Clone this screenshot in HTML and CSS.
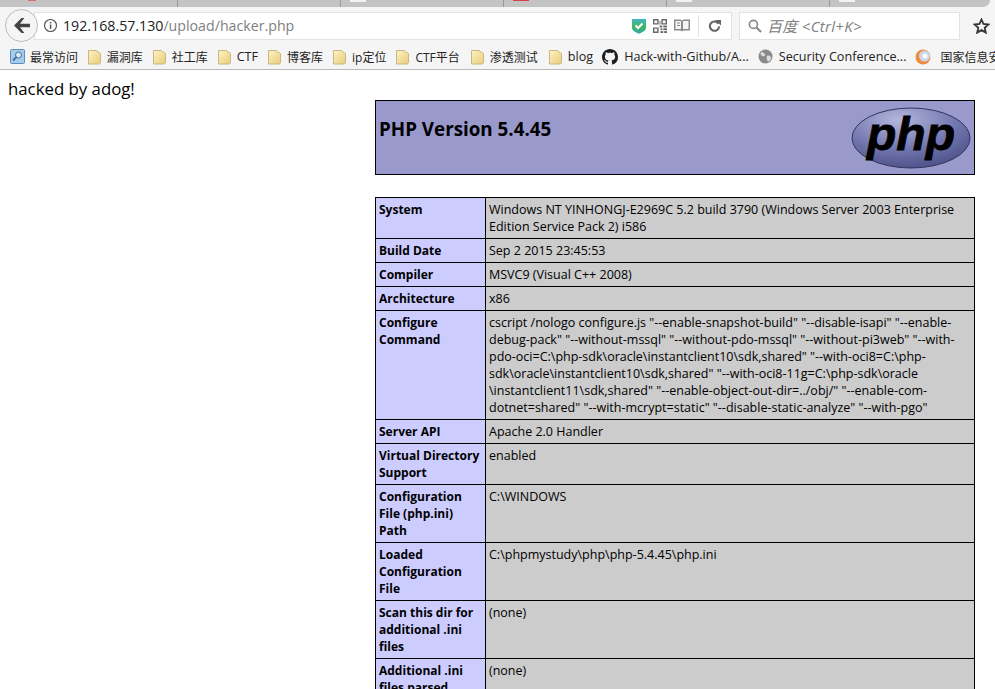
FILE: index.html
```html
<!DOCTYPE html>
<html lang="en">
<head>
<meta charset="utf-8">
<title>hacker.php</title>
<link rel="stylesheet" href="styles.css">
</head>
<body>
<svg class="defs" width="0" height="0"><defs><linearGradient id="fg" x1="0" y1="0" x2="1" y2="1"><stop offset="0" stop-color="#fdf3c4"/><stop offset="1" stop-color="#e9cd78"/></linearGradient><linearGradient id="sg" x1="0" y1="0" x2="0" y2="1"><stop offset="0" stop-color="#3fb6c9"/><stop offset=".5" stop-color="#46b45c"/><stop offset="1" stop-color="#2ea9b5"/></linearGradient><g id="f"><path d="M1.500 1.500h8l1 1.500 2 .5 1 1v9l-1 1.500h-11z" fill="url(#fg)" stroke="#c9b682"/></g></defs></svg>
<div class="browser">
  <div class="tabstrip">
    <div class="tab"><span class="tab-mark mark-a"></span></div>
    <div class="tab"></div>
    <div class="tab"><span class="tab-mark mark-c"></span></div>
    <div class="tab"><span class="tab-mark mark-b"></span></div>
    <div class="tab"><span class="tab-mark mark-c"></span></div>
    <div class="tab tab-end"><span class="tab-mark mark-c"></span></div>
  </div>
  <div class="navbar">
    <button class="back" aria-label="Back">
      <svg width="16" height="15" viewBox="0 0 16 15"><path d="M7.500 0 0 7.500 7.500 15h2.800L6 9.300h10V5.700H6L10.300 0z" fill="#444"/></svg>
    </button>
    <div class="urlbar">
      <svg class="info" width="15" height="15" viewBox="0 0 15 15"><circle cx="7.500" cy="7.500" r="6" fill="none" stroke="#555" stroke-width="1.200"/><rect x="6.800" y="6.500" width="1.500" height="4.500" fill="#555"/><rect x="6.800" y="4" width="1.500" height="1.500" fill="#555"/></svg>
      <span class="url"><span class="host">192.168.57.130</span>/upload/hacker.php</span>
      <svg class="u-shield" width="14" height="16" viewBox="0 0 14 16"><path d="M0 1h14v9c0 2.300-3.500 4.300-7 5.800C3.500 14.300 0 12.300 0 10z" fill="url(#sg)"/><path d="m3.500 7.500 2.500 2.500 4.500-4.500" fill="none" stroke="#fff" stroke-width="2"/></svg>
      <svg class="u-qr" width="14" height="14" viewBox="0 0 15 15" fill="#666"><path d="M0 0h6v6H0zm1.500 1.500v3h3v-3zM9 0h6v6H9zm1.500 1.500v3h3v-3zM0 9h6v6H0zm1.500 1.500v3h3v-3z" fill-rule="evenodd"/><rect x="7" y="2" width="1" height="4"/><rect x="7" y="7" width="3" height="2"/><rect x="11" y="7" width="4" height="2"/><rect x="8" y="10" width="2" height="2"/><rect x="11" y="10" width="4" height="2"/><rect x="8" y="13" width="3" height="2"/><rect x="12" y="13" width="3" height="2"/></svg>
      <svg class="u-book" width="16" height="13" viewBox="0 0 16 13"><path d="M0 .5h6.500L8 1.500 9.500.5H16v11H9.500L8 12.500 6.500 11.500H0z" fill="#8c8c8c"/><path d="M1.500 2h5.500v8H1.500zM9 2h5.500v8H9z" fill="#f5f5f5"/><path d="M3 4h3M3 6.500h3" stroke="#8c8c8c"/></svg>
      <span class="u-sep"></span>
      <svg class="u-reload" width="13" height="13" viewBox="0 0 14 14"><path d="M11.200 5A5 5 0 1 0 12 8" fill="none" stroke="#666" stroke-width="2.200"/><path d="M7.500 1h6.500v6z" fill="#666"/></svg>
    </div>
    <div class="search">
      <svg width="14" height="14" viewBox="0 0 15 15"><circle cx="5.800" cy="5.800" r="4.300" fill="none" stroke="#888" stroke-width="1.800"/><path d="m9 9 5 5" stroke="#888" stroke-width="2.200"/></svg>
      <span class="search-text">百度 &lt;Ctrl+K&gt;</span>
    </div>
    <svg class="star" width="17" height="16" viewBox="0 0 17 16"><path d="m8.500 1.500 2 4.500 4.900.5-3.700 3.300 1.100 4.800-4.300-2.500-4.300 2.500 1.100-4.800L1.600 6.500 6.500 6z" fill="none" stroke="#333" stroke-width="1.800"/></svg>
  </div>
  <div class="bookmarks">
    <span class="bm cjk bm-tight">
      <svg width="15" height="15" viewBox="0 0 15 15"><rect x=".5" y=".5" width="14" height="14" rx="1" fill="#a8cbe8" stroke="#5b8fc0"/><circle cx="8.500" cy="6" r="3" fill="#dbeaf6" stroke="#3e6fa0"/><path d="M6.500 8 3 11.500" stroke="#3e6fa0" stroke-width="1.800"/></svg>
      最常访问</span>
    <span class="bm cjk"><svg class="folder" viewBox="0 0 15 16"><use href="#f"/></svg>漏洞库</span>
    <span class="bm cjk"><svg class="folder" viewBox="0 0 15 16"><use href="#f"/></svg>社工库</span>
    <span class="bm"><svg class="folder" viewBox="0 0 15 16"><use href="#f"/></svg>CTF</span>
    <span class="bm cjk"><svg class="folder" viewBox="0 0 15 16"><use href="#f"/></svg>博客库</span>
    <span class="bm cjk"><svg class="folder" viewBox="0 0 15 16"><use href="#f"/></svg>ip定位</span>
    <span class="bm cjk"><svg class="folder" viewBox="0 0 15 16"><use href="#f"/></svg>CTF平台</span>
    <span class="bm cjk bm-nudge"><svg class="folder" viewBox="0 0 15 16"><use href="#f"/></svg>渗透测试</span>
    <span class="bm bm-nudge"><svg class="folder" viewBox="0 0 15 16"><use href="#f"/></svg>blog</span>
    <span class="bm bm-wide">
      <svg width="16" height="16" viewBox="0 0 16 16"><path fill="#1b1f23" d="M8 0C3.580 0 0 3.580 0 8c0 3.540 2.290 6.530 5.470 7.590.4.070.55-.17.55-.38 0-.19-.01-.82-.01-1.490-2.010.37-2.530-.49-2.690-.94-.09-.23-.48-.94-.82-1.130-.28-.15-.68-.52-.01-.53.63-.01 1.080.58 1.230.82.720 1.210 1.870.87 2.330.66.070-.52.280-.87.510-1.070-1.780-.2-3.640-.89-3.640-3.950 0-.87.310-1.590.820-2.150-.08-.2-.36-1.020.08-2.120 0 0 .67-.21 2.200.82.640-.18 1.320-.27 2-.27s1.360.09 2 .27c1.530-1.040 2.200-.82 2.200-.82.440 1.100.160 1.920.080 2.120.51.560.820 1.270.820 2.150 0 3.070-1.870 3.750-3.650 3.950.29.250.54.730.54 1.480 0 1.070-.01 1.930-.01 2.200 0 .21.150.46.550.38A8.010 8.010 0 0 0 16 8c0-4.420-3.580-8-8-8z"/></svg>
      Hack-with-Github/A...</span>
    <span class="bm bm-wide">
      <svg width="15" height="15" viewBox="0 0 15 15"><circle cx="7.500" cy="7.500" r="7" fill="#8a8a8a"/><path d="M3 3.500c2-.5 3 .5 4 2S5 8 4 7 2 5 3 3.500zM9 7c2-1 4 0 4 2s-2 4-3 3.500S8 8 9 7z" fill="#dcdcdc"/></svg>
      Security Conference...</span>
    <span class="bm cjk bm-last">
      <svg width="16" height="16" viewBox="0 0 16 16"><circle cx="8" cy="8" r="7.500" fill="#f08a3c"/><circle cx="9.500" cy="7" r="5.500" fill="#c9d8ea"/><circle cx="10" cy="7" r="2.500" fill="#fff"/></svg>
      国家信息安全漏洞</span>
  </div>
</div>

<main class="page">
  <p class="hacked">hacked by adog!</p>
  <div class="phpinfo">
    <table class="head">
      <tr>
        <td class="h-cell">
          <svg class="logo" width="120" height="62" viewBox="0 0 120 62" role="img" aria-label="PHP logo">
            <defs><radialGradient id="lg" cx=".4" cy=".2" r=".85"><stop offset="0" stop-color="#b4b7dc"/><stop offset=".55" stop-color="#7478b0"/><stop offset="1" stop-color="#4b4f86"/></radialGradient></defs>
            <ellipse cx="60" cy="31" rx="59" ry="30" fill="url(#lg)" stroke="#33365f"/>
            <text class="logo-text" x="16" y="43" textLength="88" lengthAdjust="spacingAndGlyphs">php</text>
          </svg>
          <h1>PHP Version 5.4.45</h1>
        </td>
      </tr>
    </table>
    <table class="info-table">
      <tr><td class="e">System</td><td class="v">Windows NT YINHONGJ-E2969C 5.2 build 3790 (Windows Server 2003 Enterprise Edition Service Pack 2) i586</td></tr>
      <tr><td class="e">Build Date</td><td class="v">Sep 2 2015 23:45:53</td></tr>
      <tr><td class="e">Compiler</td><td class="v">MSVC9 (Visual C++ 2008)</td></tr>
      <tr><td class="e">Architecture</td><td class="v">x86</td></tr>
      <tr><td class="e">Configure Command</td><td class="v">cscript /nologo configure.js "--enable-snapshot-build" "--disable-isapi" "--enable-debug-pack" "--without-mssql" "--without-pdo-mssql" "--without-pi3web" "--with-pdo-oci=C:\php-sdk\oracle\instantclient10\sdk,shared" "--with-oci8=C:\php-sdk\oracle\instantclient10\sdk,shared" "--with-oci8-11g=C:\php-sdk\oracle<wbr>\instantclient11\sdk,shared" "--enable-object-out-dir=../obj/" "--enable-com-dotnet=shared" "--with-mcrypt=static" "--disable-static-analyze" "--with-pgo"</td></tr>
      <tr><td class="e">Server API</td><td class="v">Apache 2.0 Handler</td></tr>
      <tr><td class="e">Virtual Directory Support</td><td class="v">enabled</td></tr>
      <tr><td class="e">Configuration File (php.ini) Path</td><td class="v">C:\WINDOWS</td></tr>
      <tr><td class="e">Loaded Configuration File</td><td class="v">C:\phpmystudy\php\php-5.4.45\php.ini</td></tr>
      <tr><td class="e">Scan this dir for additional .ini files</td><td class="v">(none)</td></tr>
      <tr><td class="e">Additional .ini files parsed</td><td class="v">(none)</td></tr>
    </table>
  </div>
</main>
</body>
</html>
```
FILE: styles.css
```css
* { box-sizing: border-box; }
html, body { margin: 0; padding: 0; height: 689px; overflow: hidden; background: #fff; }
body { font-family: "Open Sans", "Noto Sans CJK SC", sans-serif; }
.defs { position: absolute; }
.browser { height: 70px; background: #f5f5f5; border-bottom: 1px solid #b9b9b9; }
.tabstrip { height: 7px; margin-right: 5px; background: #c4c4c4; display: flex; border-bottom-right-radius: 8px; overflow: hidden; }
.tab { width: 163px; border-right: 1px solid #999; position: relative; }
.tab:first-child { width: 178px; }
.tab-end { flex: 1; border-right: 0; }
.tab-mark { position: absolute; left: 9px; top: 0; width: 16px; height: 2px; }
.mark-a { left: 28px; width: 8px; height: 1px; background: #d66; }
.mark-b { height: 1px; background: #d9404a; }
.mark-c { background: #f3f3f3; }
.navbar { height: 37px; display: flex; align-items: center; position: relative; padding-left: 5px; }
.back { width: 33px; height: 33px; border-radius: 50%; border: 1px solid #bbb; background: #f5f5f5; display: flex; align-items: center; justify-content: center; padding: 0; flex: none; z-index: 1; }
.urlbar { width: 698px; height: 28px; margin-left: -4px; background: #fff; border: 1px solid #e2e2e2; display: flex; align-items: center; padding-left: 8px; flex: none; }
.info { flex: none; }
.url { margin-left: 5px; font-size: 14.200px; color: #808080; flex: 1; }
.host { color: #222; }
.u-shield { margin-right: 7px; }
.u-qr { margin-right: 7px; }
.u-book { margin-right: 8px; }
.u-sep { width: 1px; height: 22px; background: #e2e2e2; margin-right: 9px; }
.u-reload { margin-right: 10px; }
.search { width: 221px; height: 28px; margin-left: 7px; background: #fff; border: 1px solid #e2e2e2; display: flex; align-items: center; padding-left: 8px; gap: 5px; flex: none; }
.search-text { font-style: italic; font-size: 15px; letter-spacing: .3px; color: #808080; }
.star { margin-left: 13px; flex: none; }
.bookmarks { height: 25px; display: flex; align-items: center; padding-left: 10px; gap: 9px; white-space: nowrap; font-size: 12.600px; color: #222; overflow: hidden; }
.bm { display: flex; align-items: center; gap: 5px; flex: none; }
.bm-tight { margin-right: -.4px; }
.bm-nudge { margin-left: 1px; }
.bm-wide { gap: 6px; }
.bm-last { gap: 9px; }
.cjk { font-size: 12px; }
.folder { width: 15px; height: 16px; }
.page { position: relative; }
.hacked { margin: 0; position: absolute; left: 8px; top: 8px; font-size: 16.800px; line-height: 22px; color: #000; }
.phpinfo { padding: 30px 20px 0 375px; font-size: 12px; color: #000; }
table { border-collapse: collapse; width: 600px; table-layout: fixed; }
.head { margin-bottom: 22px; }
.h-cell { background: #9999cc; border: 1px solid #000; height: 74px; padding: 3px 3px 0; vertical-align: top; }
.logo { float: right; margin: 3px 0 0; }
.logo-text { font-family: "Liberation Sans", sans-serif; font-weight: 700; font-style: italic; font-size: 46px; fill: #000; stroke: #000; stroke-width: .8px; }
h1 { margin: 13px 0 0; font-size: 18.800px; line-height: 24px; font-weight: 700; }
.info-table td { border: 1px solid #000; vertical-align: top; padding: 3px; line-height: 17px; }
.e { width: 110px; background: #ccccff; font-weight: 700; }
.v { background: #cccccc; font-size: 12.500px; overflow-wrap: break-word; }
```
